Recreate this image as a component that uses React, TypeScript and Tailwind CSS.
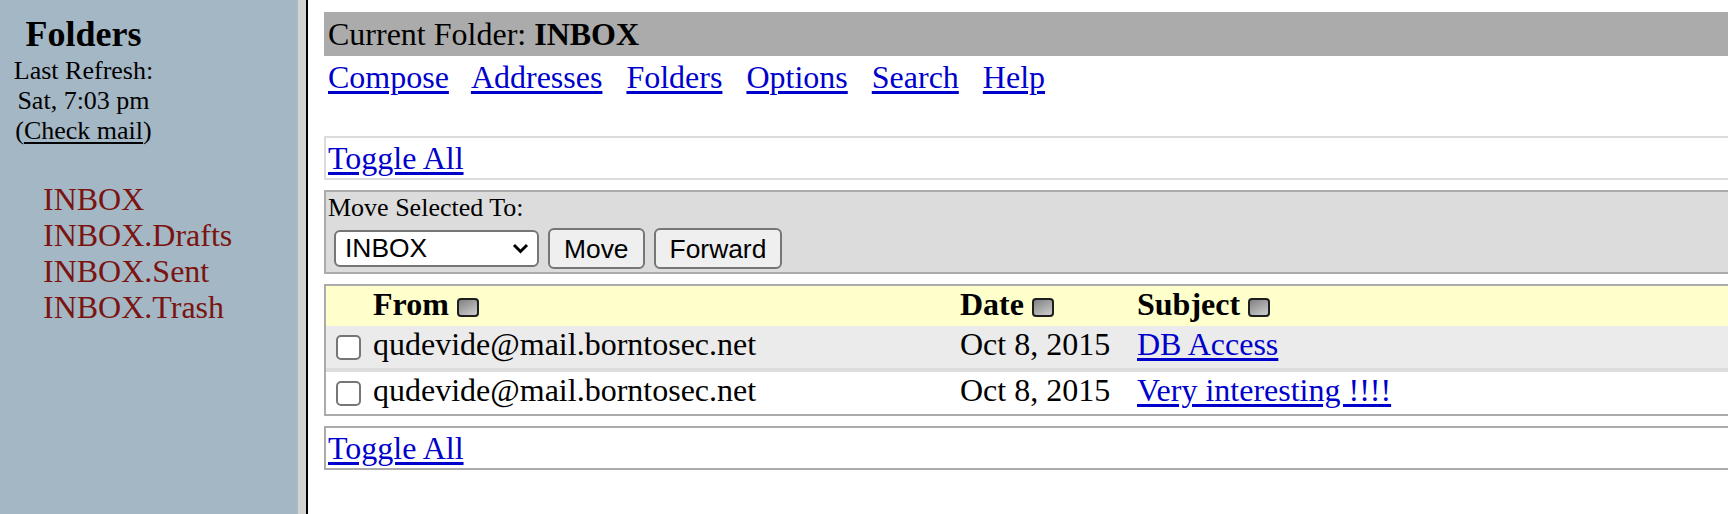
import React from "react";

const FOLDERS = ["INBOX", "INBOX.Drafts", "INBOX.Sent", "INBOX.Trash"];
const MENU = ["Compose", "Addresses", "Folders", "Options", "Search", "Help"];
const MESSAGES = [
  { from: "qudevide@mail.borntosec.net", date: "Oct 8, 2015", subject: "DB Access", bg: "bg-[#ebebeb]" },
  { from: "qudevide@mail.borntosec.net", date: "Oct 8, 2015", subject: "Very interesting !!!!", bg: "bg-white" },
];

function SortIcon() {
  return (
    <svg width="22" height="19" viewBox="0 0 22 19" className="ml-[8px] inline-block align-[-2px]">
      <defs>
        <linearGradient id="sortfill" x1="0" y1="0" x2="0.6" y2="1">
          <stop offset="0" stopColor="#7c7c7c" />
          <stop offset="1" stopColor="#c6c6c6" />
        </linearGradient>
      </defs>
      <rect x="1" y="1" width="20" height="17" rx="3" fill="url(#sortfill)" stroke="#1e1e1e" strokeWidth="2" />
    </svg>
  );
}

function Checkbox() {
  return <span className="block h-[25px] w-[25px] rounded-[5px] border-2 border-[#767676] bg-white" />;
}

export default function App() {
  return (
    <div className="flex h-[514px] w-[1728px] overflow-hidden bg-white font-['Liberation_Serif',serif] text-black">
      {/* left frame */}
      <aside className="w-[297px] shrink-0 bg-[#a4b7c5]">
        <div className="w-[167px] pt-[14px] text-center">
          <div className="text-[36px] font-bold leading-[40px]">Folders</div>
          <div className="mt-[2px] text-[26px] leading-[30px]">
            <div>Last Refresh:</div>
            <div>Sat, 7:03 pm</div>
            <div>
              (<a className="underline underline-offset-[3px]">Check mail</a>)
            </div>
          </div>
        </div>
        <ul className="mt-[35px] pl-[43px] text-[32px] leading-[36px] text-[#7a1410]">
          {FOLDERS.map((f) => (
            <li key={f}>{f}</li>
          ))}
        </ul>
      </aside>

      {/* frame border */}
      <div className="w-[9px] shrink-0 border-l border-[#b8b8b8] bg-[#d2d2d2]" />
      <div className="w-[2px] shrink-0 bg-black" />

      {/* right frame */}
      <main className="min-w-0 flex-1 overflow-hidden pl-[16px] pt-[12px]">
        <div className="w-[1420px] text-[32px]">
          <div className="h-[44px] bg-[#ababab] pl-[4px] leading-[44px]">
            Current Folder: <b>INBOX</b>
          </div>

          <nav className="flex gap-[24px] pl-[4px] pt-[3px] leading-[36px] text-[#0000cc]">
            {MENU.map((m, i) => (
              <a key={m} className={i === 0 ? "mr-[-2px] underline underline-offset-[3px]" : "underline underline-offset-[3px]"}>
                {m}
              </a>
            ))}
          </nav>

          <div className="mt-[41px] h-[44px] border-2 border-r-0 border-[#dcdcdc] pl-[2px] leading-[40px]">
            <a className="text-[#0000cc] underline underline-offset-[3px]">Toggle All</a>
          </div>

          <div className="mt-[10px] h-[84px] border-2 border-r-0 border-[#ababab] bg-[#dcdcdc] pl-[2px]">
            <div className="pt-[1px] text-[26px] leading-[30px]">Move Selected To:</div>
            <div className="mt-[5px] flex h-[41px] items-center gap-[9px] pl-[6px] font-['Liberation_Sans',Arial,sans-serif] text-[26.4px]">
              <div className="flex h-[37px] w-[205px] items-center justify-between rounded-[6px] border-2 border-[#767676] bg-white pl-[9px] pr-[8px]">
                <span>INBOX</span>
                <svg width="17" height="11" viewBox="0 0 17 11">
                  <polyline points="2,2 8.5,8.5 15,2" fill="none" stroke="#000" strokeWidth="3" />
                </svg>
              </div>
              <button className="h-[41px] rounded-[6px] border-2 border-[#767676] bg-[#efefef] px-[14px]">Move</button>
              <button className="h-[41px] rounded-[6px] border-2 border-[#767676] bg-[#efefef] px-[14px]">Forward</button>
            </div>
          </div>

          <div className="mt-[10px] border-2 border-r-0 border-[#ababab]">
            <div className="grid h-[40px] grid-cols-[47px_587px_177px_1fr] bg-[#ffffcc] font-bold leading-[36px]">
              <div />
              <div>
                From
                <SortIcon />
              </div>
              <div>
                Date
                <SortIcon />
              </div>
              <div>
                Subject
                <SortIcon />
              </div>
            </div>
            {MESSAGES.map((m, i) => (
              <div key={i}>
                {i > 0 && <div className="h-[4px] bg-[#dcdcdc]" />}
                <div className={`grid h-[42px] grid-cols-[47px_587px_177px_1fr] leading-[36px] ${m.bg}`}>
                  <div className="flex items-center pl-[10px]">
                    <Checkbox />
                  </div>
                  <div>{m.from}</div>
                  <div>{m.date}</div>
                  <div>
                    <a className="text-[#0000cc] underline underline-offset-[3px]">{m.subject}</a>
                  </div>
                </div>
              </div>
            ))}
          </div>

          <div className="mt-[10px] h-[44px] border-2 border-r-0 border-[#ababab] pl-[2px] leading-[40px]">
            <a className="text-[#0000cc] underline underline-offset-[3px]">Toggle All</a>
          </div>
        </div>
      </main>
    </div>
  );
}
